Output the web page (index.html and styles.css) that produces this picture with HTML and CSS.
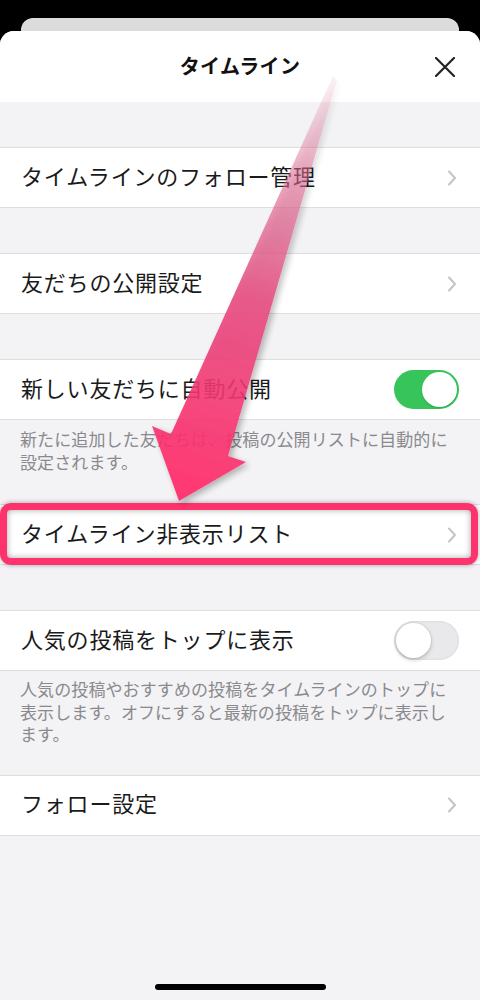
FILE: index.html
```html
<!DOCTYPE html>
<html lang="ja">
<head>
<meta charset="utf-8">
<title>タイムライン</title>
<link rel="stylesheet" href="styles.css">
</head>
<body>
<div class="phone">
  <div class="back-card"></div>
  <div class="sheet">
    <header class="header">
      <span></span>
      <h1 class="title">タイムライン</h1>
      <button class="close" aria-label="閉じる">
        <svg width="20" height="20" viewBox="0 0 20 20"><path d="M1 1L19 19M19 1L1 19" stroke="#222" stroke-width="2.2" stroke-linecap="round" fill="none"/></svg>
      </button>
    </header>

    <div class="section">
      <div class="row"><span class="label">タイムラインのフォロー管理</span><svg class="chev" width="10" height="16" viewBox="0 0 10 16"><path d="M2 1.5L8 8L2 14.5" stroke="#c4c4c8" stroke-width="2" fill="none" stroke-linecap="round" stroke-linejoin="round"/></svg></div>
    </div>

    <div class="section">
      <div class="row"><span class="label">友だちの公開設定</span><svg class="chev" width="10" height="16" viewBox="0 0 10 16"><path d="M2 1.5L8 8L2 14.5" stroke="#c4c4c8" stroke-width="2" fill="none" stroke-linecap="round" stroke-linejoin="round"/></svg></div>
    </div>

    <div class="section">
      <div class="row"><span class="label">新しい友だちに自動公開</span><span class="toggle on"><span class="knob"></span></span></div>
    </div>
    <p class="desc desc-two">新たに追加した友だちは、投稿の公開リストに自動的に設定されます。</p>

    <div class="section section-flush highlighted">
      <div class="row"><span class="label">タイムライン非表示リスト</span><svg class="chev" width="10" height="16" viewBox="0 0 10 16"><path d="M2 1.5L8 8L2 14.5" stroke="#c4c4c8" stroke-width="2" fill="none" stroke-linecap="round" stroke-linejoin="round"/></svg></div>
      <div class="highlight-frame"></div>
    </div>

    <div class="section">
      <div class="row"><span class="label">人気の投稿をトップに表示</span><span class="toggle off"><span class="knob"></span></span></div>
    </div>
    <p class="desc desc-three">人気の投稿やおすすめの投稿をタイムラインのトップに表示します。オフにすると最新の投稿をトップに表示します。</p>

    <div class="section section-flush">
      <div class="row"><span class="label">フォロー設定</span><svg class="chev" width="10" height="16" viewBox="0 0 10 16"><path d="M2 1.5L8 8L2 14.5" stroke="#c4c4c8" stroke-width="2" fill="none" stroke-linecap="round" stroke-linejoin="round"/></svg></div>
    </div>

    <div class="home-indicator"></div>
  </div>

  <svg class="arrow" width="480" height="1000" viewBox="0 0 480 1000">
    <defs>
      <linearGradient id="ag" gradientUnits="userSpaceOnUse" x1="335" y1="78" x2="190" y2="480">
        <stop offset="0" stop-color="#e27a9c" stop-opacity="0.1"/>
        <stop offset="0.25" stop-color="#dd6a92" stop-opacity="0.6"/>
        <stop offset="0.55" stop-color="#e4467c" stop-opacity="0.95"/>
        <stop offset="1" stop-color="#ff2c6a" stop-opacity="1"/>
      </linearGradient>
      <filter id="sh" x="-20%" y="-10%" width="140%" height="120%">
        <feDropShadow dx="3" dy="3" stdDeviation="3" flood-color="#000" flood-opacity="0.3"/>
      </filter>
    </defs>
    <g opacity="0.92" filter="url(#sh)">
      <polygon points="333,76 337,80 228,456 246,462 179,501 152,426 171,434" fill="url(#ag)"/>
    </g>
  </svg>
</div>
</body>
</html>
```

FILE: styles.css
```css
* { box-sizing: border-box; }

html, body {
  margin: 0;
  padding: 0;
  background: #000;
}

body {
  font-family: "Noto Sans CJK JP", "Noto Sans", sans-serif;
  color: #1a1a1a;
}

.phone {
  position: relative;
  width: 480px;
  height: 1000px;
  overflow: hidden;
  background: #000;
  padding-top: 18px;
}

.back-card {
  height: 13px;
  margin: 0 21px;
  background: #dcdcdc;
  border-radius: 12px 12px 0 0;
}

.sheet {
  height: 969px;
  background: #f3f2f4;
  border-radius: 14px 14px 0 0;
  overflow: hidden;
  display: flex;
  flex-direction: column;
}

.header {
  height: 71px;
  flex: none;
  background: #fff;
  display: grid;
  grid-template-columns: 1fr auto 1fr;
  align-items: center;
}

.title {
  margin: 0 0 3px 0;
  font-size: 20px;
  font-weight: 700;
  color: #111;
  letter-spacing: 0.3px;
}

.close {
  justify-self: end;
  margin-right: 25px;
  padding: 0;
  border: 0;
  background: none;
  width: 20px;
  height: 20px;
  display: flex;
}

.section {
  position: relative;
  flex: none;
  margin-top: 45px;
  background: #fff;
  border-top: 1px solid #dededf;
  border-bottom: 1px solid #dededf;
}

.section-flush {
  margin-top: 0;
}

.row {
  height: 59px;
  display: flex;
  align-items: center;
  justify-content: space-between;
  padding: 0 21px 0 21px;
}

.label {
  font-size: 22px;
  letter-spacing: 0.8px;
  color: #1a1a1a;
  margin-bottom: 6px;
}

.chev {
  margin-right: 2px;
}

.toggle {
  position: relative;
  width: 65px;
  height: 39px;
  border-radius: 20px;
  display: flex;
  align-items: center;
  padding: 2px;
}

.toggle.on {
  background: #37c45a;
  justify-content: flex-end;
}

.toggle.off {
  background: #e9e9eb;
  justify-content: flex-start;
  box-shadow: inset 0 0 0 1.5px #e2e2e4;
}

.knob {
  width: 35px;
  height: 35px;
  border-radius: 50%;
  background: #fff;
}

.toggle.on .knob {
  box-shadow: 0 1px 2px rgba(0, 0, 0, 0.15);
}

.toggle.off .knob {
  box-shadow: 0 2px 4px rgba(0, 0, 0, 0.2), 0 0 0 1px rgba(0, 0, 0, 0.05);
}

.desc {
  flex: none;
  margin: 0;
  padding: 7px 20px 31px 20px;
  font-size: 17px;
  line-height: 23px;
  color: #8a8a8e;
  letter-spacing: 0.1px;
}

.desc-three {
  line-height: 22.5px;
  padding-bottom: 29px;
}

.highlight-frame {
  position: absolute;
  left: 0;
  right: 2px;
  top: -2px;
  bottom: -1px;
  border: 7px solid #fc336d;
  border-radius: 11px;
  box-shadow: 0 0 5px rgba(0, 0, 0, 0.35), inset 0 0 6px rgba(0, 0, 0, 0.35);
  pointer-events: none;
}

.home-indicator {
  flex: none;
  margin-top: auto;
  margin-bottom: 10px;
  align-self: center;
  width: 171px;
  height: 6px;
  border-radius: 3px;
  background: #000;
}

.arrow {
  position: absolute;
  left: 0;
  top: 0;
  pointer-events: none;
}
```
